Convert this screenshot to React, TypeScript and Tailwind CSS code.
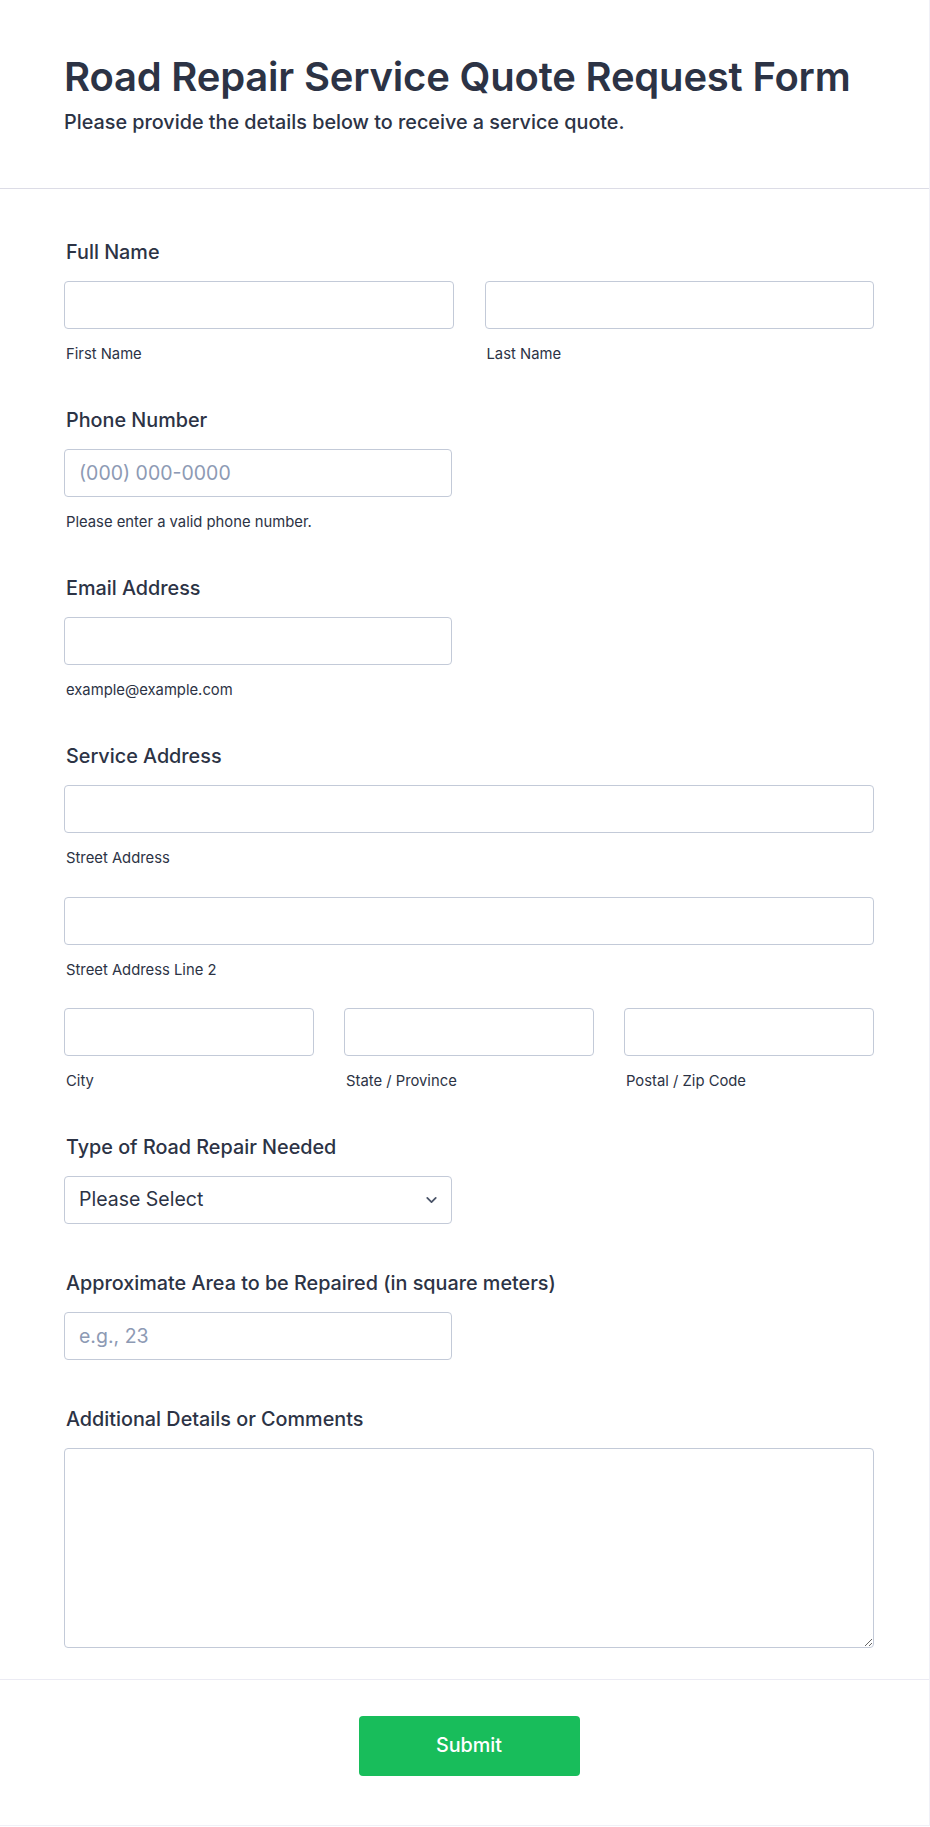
import { ChevronDown } from "lucide-react";

const inputClass =
  "block h-12 w-full rounded-[4px] border border-[#c3cad8] bg-white px-[14px] text-[19.5px] text-[#2c3345] outline-none placeholder:text-[#8d9ab4]";

function Label({ children }: { children: React.ReactNode }) {
  return (
    <div className="mb-[17px] pl-[2px] text-[19.8px] font-medium leading-6 text-[#2c3345]">
      {children}
    </div>
  );
}

function SubLabel({ children }: { children: React.ReactNode }) {
  return <div className="mt-[15px] pl-[2px] text-[14.8px] leading-5 text-[#2c3345]">{children}</div>;
}

export default function App() {
  return (
    <div
      className="w-[930px] border-r border-b border-[#f0f0f7] bg-white"
      style={{ fontFamily: "Inter, 'Noto Sans', sans-serif" }}
    >
      <header className="border-b border-[#dcdce6] pl-[64px] pr-[55px] pt-[53px] pb-[52px]">
        <h1 className="text-[40px] font-semibold leading-[48px] tracking-[-0.2px] text-[#2c3345]">
          Road Repair Service Quote Request Form
        </h1>
        <p className="mt-2 text-[19.8px] font-medium leading-[27px] text-[#2c3345]">
          Please provide the details below to receive a service quote.
        </p>
      </header>

      <main className="pl-[64px] pr-[55px] pt-[51px] pb-[31px]">
        <section>
          <Label>Full Name</Label>
          <div className="grid grid-cols-2 gap-[31px]">
            <div>
              <input className={inputClass} />
              <SubLabel>First Name</SubLabel>
            </div>
            <div>
              <input className={inputClass} />
              <SubLabel>Last Name</SubLabel>
            </div>
          </div>
        </section>

        <section className="mt-[44px]">
          <Label>Phone Number</Label>
          <div className="w-[388px]">
            <input className={inputClass} placeholder="(000) 000-0000" />
            <SubLabel>Please enter a valid phone number.</SubLabel>
          </div>
        </section>

        <section className="mt-[44px]">
          <Label>Email Address</Label>
          <div className="w-[388px]">
            <input className={inputClass} />
            <SubLabel>example@example.com</SubLabel>
          </div>
        </section>

        <section className="mt-[44px]">
          <Label>Service Address</Label>
          <input className={inputClass} />
          <SubLabel>Street Address</SubLabel>
          <input className={`${inputClass} mt-[29px]`} />
          <SubLabel>Street Address Line 2</SubLabel>
          <div className="mt-[28px] grid grid-cols-3 gap-[30px]">
            <div>
              <input className={inputClass} />
              <SubLabel>City</SubLabel>
            </div>
            <div>
              <input className={inputClass} />
              <SubLabel>State / Province</SubLabel>
            </div>
            <div>
              <input className={inputClass} />
              <SubLabel>Postal / Zip Code</SubLabel>
            </div>
          </div>
        </section>

        <section className="mt-[44px]">
          <Label>Type of Road Repair Needed</Label>
          <div className="relative w-[388px]">
            <select className={`${inputClass} appearance-none pr-10`} defaultValue="">
              <option value="">Please Select</option>
              <option>Pothole Repair</option>
              <option>Crack Sealing</option>
              <option>Resurfacing</option>
            </select>
            <ChevronDown
              className="pointer-events-none absolute right-[12px] top-1/2 -translate-y-1/2 text-[#4a5468]"
              size={17}
              strokeWidth={2.5}
            />
          </div>
        </section>

        <section className="mt-[47px]">
          <Label>Approximate Area to be Repaired (in square meters)</Label>
          <div className="w-[388px]">
            <input className={inputClass} placeholder="e.g., 23" />
          </div>
        </section>

        <section className="mt-[47px]">
          <Label>Additional Details or Comments</Label>
          <textarea className="block h-[200px] w-full rounded-[4px] border border-[#c3cad8] bg-white px-[14px] py-3 text-[19.5px] text-[#2c3345] outline-none" />
        </section>
      </main>

      <footer className="flex justify-center border-t border-[#ebebf3] pl-[64px] pr-[55px] pt-[36px] pb-[49px]">
        <button
          type="button"
          className="h-[60px] w-[221px] rounded-[4px] bg-[#18bd5b] text-[19.8px] font-medium text-white"
        >
          Submit
        </button>
      </footer>
    </div>
  );
}
